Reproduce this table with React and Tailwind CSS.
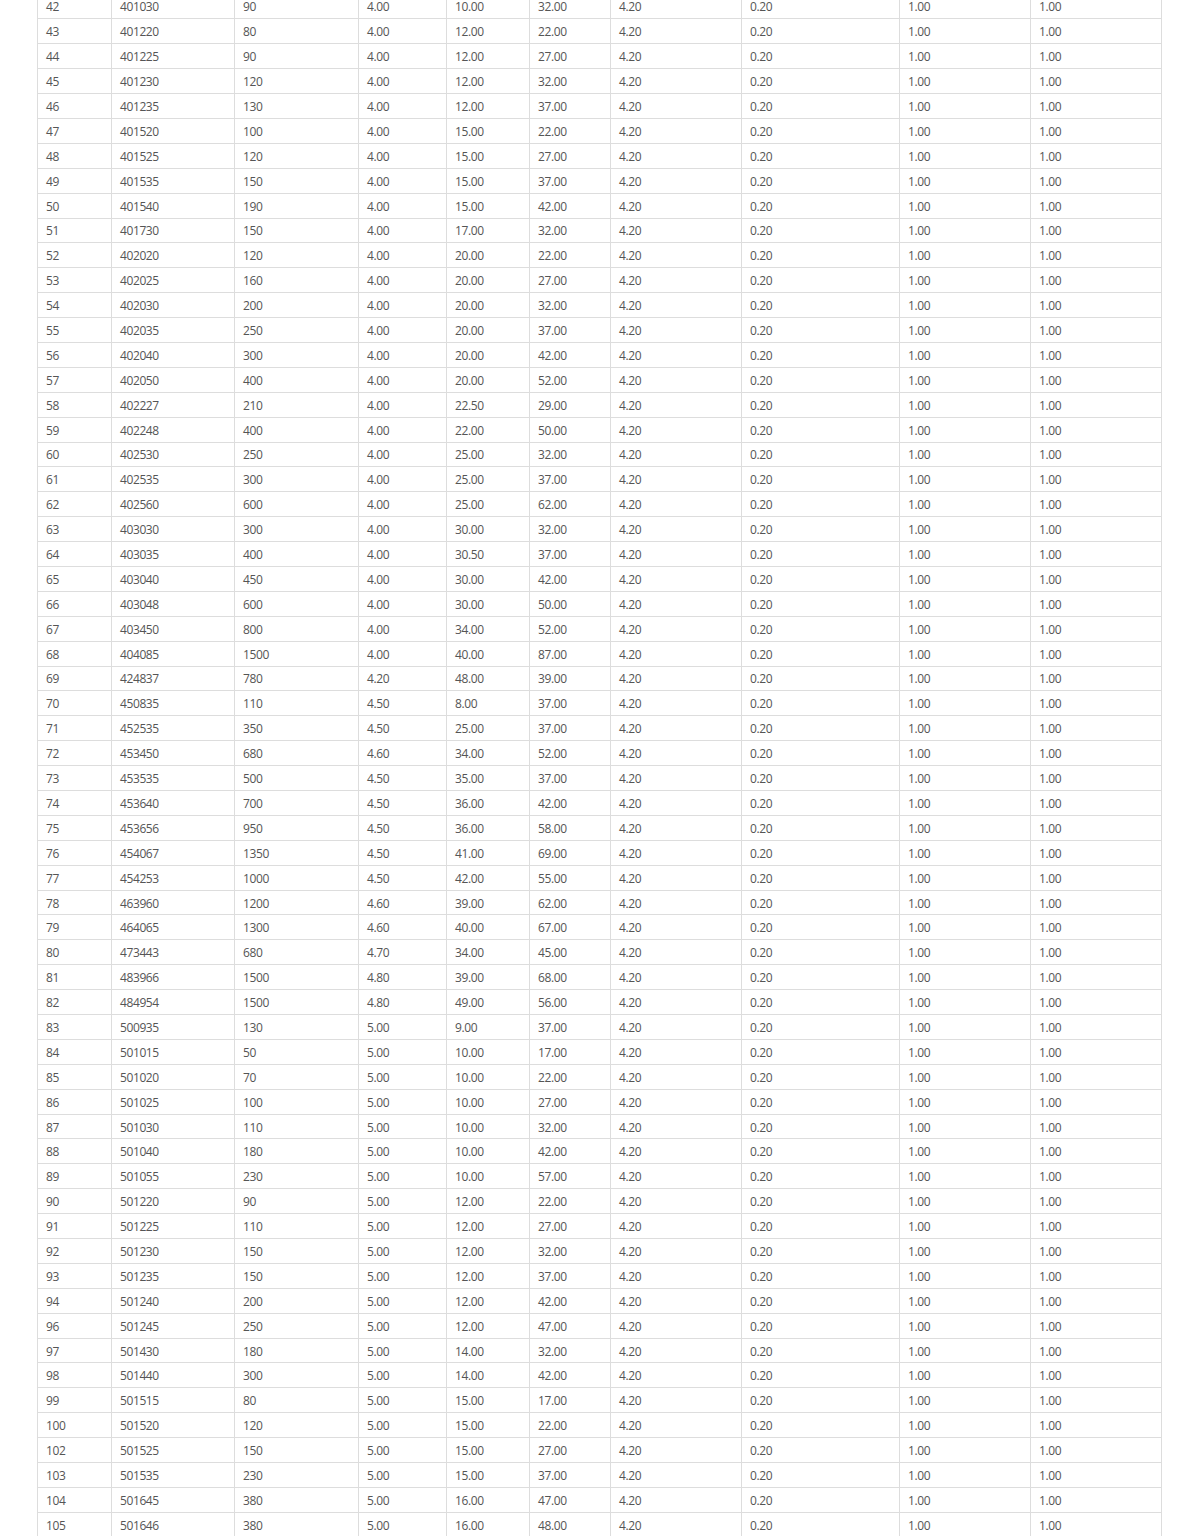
import React from "react";

const raw = `42 401030 90 4.00 10.00 32.00
43 401220 80 4.00 12.00 22.00
44 401225 90 4.00 12.00 27.00
45 401230 120 4.00 12.00 32.00
46 401235 130 4.00 12.00 37.00
47 401520 100 4.00 15.00 22.00
48 401525 120 4.00 15.00 27.00
49 401535 150 4.00 15.00 37.00
50 401540 190 4.00 15.00 42.00
51 401730 150 4.00 17.00 32.00
52 402020 120 4.00 20.00 22.00
53 402025 160 4.00 20.00 27.00
54 402030 200 4.00 20.00 32.00
55 402035 250 4.00 20.00 37.00
56 402040 300 4.00 20.00 42.00
57 402050 400 4.00 20.00 52.00
58 402227 210 4.00 22.50 29.00
59 402248 400 4.00 22.00 50.00
60 402530 250 4.00 25.00 32.00
61 402535 300 4.00 25.00 37.00
62 402560 600 4.00 25.00 62.00
63 403030 300 4.00 30.00 32.00
64 403035 400 4.00 30.50 37.00
65 403040 450 4.00 30.00 42.00
66 403048 600 4.00 30.00 50.00
67 403450 800 4.00 34.00 52.00
68 404085 1500 4.00 40.00 87.00
69 424837 780 4.20 48.00 39.00
70 450835 110 4.50 8.00 37.00
71 452535 350 4.50 25.00 37.00
72 453450 680 4.60 34.00 52.00
73 453535 500 4.50 35.00 37.00
74 453640 700 4.50 36.00 42.00
75 453656 950 4.50 36.00 58.00
76 454067 1350 4.50 41.00 69.00
77 454253 1000 4.50 42.00 55.00
78 463960 1200 4.60 39.00 62.00
79 464065 1300 4.60 40.00 67.00
80 473443 680 4.70 34.00 45.00
81 483966 1500 4.80 39.00 68.00
82 484954 1500 4.80 49.00 56.00
83 500935 130 5.00 9.00 37.00
84 501015 50 5.00 10.00 17.00
85 501020 70 5.00 10.00 22.00
86 501025 100 5.00 10.00 27.00
87 501030 110 5.00 10.00 32.00
88 501040 180 5.00 10.00 42.00
89 501055 230 5.00 10.00 57.00
90 501220 90 5.00 12.00 22.00
91 501225 110 5.00 12.00 27.00
92 501230 150 5.00 12.00 32.00
93 501235 150 5.00 12.00 37.00
94 501240 200 5.00 12.00 42.00
96 501245 250 5.00 12.00 47.00
97 501430 180 5.00 14.00 32.00
98 501440 300 5.00 14.00 42.00
99 501515 80 5.00 15.00 17.00
100 501520 120 5.00 15.00 22.00
102 501525 150 5.00 15.00 27.00
103 501535 230 5.00 15.00 37.00
104 501645 380 5.00 16.00 47.00
105 501646 380 5.00 16.00 48.00`;

// every row ends with the same four columns
const rows = raw.split("\n").map(line => [...line.trim().split(" "), "4.20", "0.20", "1.00", "1.00"]);

export default function App() {
    return (
        <div className="bg-white w-[1200px] h-[1536px] overflow-hidden">
            <div
                className="ml-[37px] mt-[-5.5px] w-[1125px] border-l border-[#dddddd] text-[12px] tracking-[-0.4px] text-[#555555]"
                style={{fontFamily: '"Open Sans", "Noto Sans", sans-serif'}}
            >
                {rows.map(row => (
                    <div
                        key={row[0]}
                        className="grid grid-cols-[74px_123px_124px_88px_83px_81px_131px_158px_131px_131px] h-[24.9px]"
                    >
                        {row.map((cell, i) => (
                            <div
                                key={i}
                                className="flex items-center pl-2 pr-2 pt-[2px] border-r border-b border-[#dddddd] leading-none"
                            >
                                {cell}
                            </div>
                        ))}
                    </div>
                ))}
            </div>
        </div>
    );
}
